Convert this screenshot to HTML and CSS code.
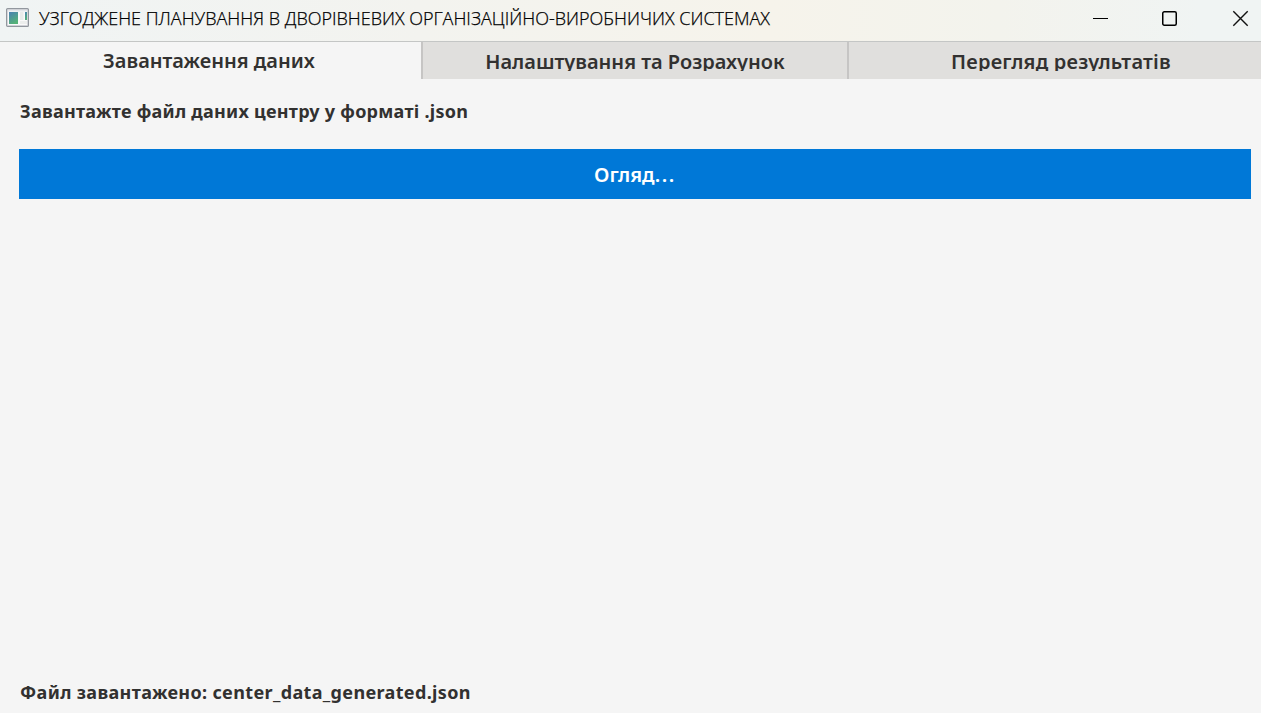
FILE: index.html
```html
<!DOCTYPE html>
<html lang="uk">
<head>
<meta charset="utf-8">
<title>Узгоджене планування</title>
<link rel="stylesheet" href="styles.css">
</head>
<body>
<div class="window">
  <header class="titlebar">
    <svg class="app-icon" width="24" height="20" viewBox="0 0 24 20">
      <defs>
        <linearGradient id="pane" x1="0" y1="0" x2="0.5" y2="1"><stop offset="0" stop-color="#4a80b4"/><stop offset="1" stop-color="#55b278"/></linearGradient>
      </defs>
      <rect x="0.6" y="0.6" width="21.8" height="17.8" rx="1" fill="#e4e6ea" stroke="#92979e" stroke-width="1.2"/>
      <rect x="2" y="3.5" width="19" height="13.5" fill="#fafafa"/>
      <rect x="3" y="4" width="9" height="12" fill="url(#pane)"/>
      <rect x="14" y="4" width="3.5" height="8" fill="#e9ebea"/>
      <rect x="19" y="4" width="2" height="8" fill="url(#pane)"/>
      <rect x="14" y="13" width="7" height="3" fill="#eceeed"/>
    </svg>
    <h1 class="title"><span>УЗГОДЖЕНЕ ПЛАНУВАННЯ В ДВОРІВНЕВИХ ОРГАНІЗАЦІЙНО-ВИРОБНИЧИХ СИСТЕМАХ</span></h1>
    <div class="controls">
      <svg width="16" height="16" viewBox="0 0 16 16"><path d="M0 8.5H15" stroke="#000" fill="none"/></svg>
      <svg width="16" height="16" viewBox="0 0 16 16"><rect x="-0.25" y="1.75" width="13.5" height="13.5" rx="1.5" stroke="#000" stroke-width="1.5" fill="none"/></svg>
      <svg width="16" height="16" viewBox="0 0 16 16"><path d="M0.3 1.3L14.7 15.7M14.7 1.3L0.3 15.7" stroke="#111" stroke-width="1.4" fill="none"/></svg>
    </div>
  </header>
  <nav class="tabs">
    <div class="tab tab-active"><span class="tab-label">Завантаження даних</span></div>
    <div class="tab"><span class="tab-label">Налаштування та Розрахунок</span></div>
    <div class="tab tab-results"><span class="tab-label">Перегляд результатів</span></div>
  </nav>
  <main class="page">
    <p class="label prompt"><span>Завантажте файл даних центру у форматі .json</span></p>
    <button class="browse"><span>Огляд<span class="dots">...</span></span></button>
    <p class="label status"><span>Файл завантажено: center_data_generated.json</span></p>
  </main>
</div>
</body>
</html>
```
FILE: styles.css
```css
* { box-sizing: border-box; }
body { margin: 0; font-family: "Noto Sans", sans-serif; color: #323130; }
.window { width: 1261px; height: 713px; display: flex; flex-direction: column; background: #f5f5f5; overflow: hidden; }
.titlebar { height: 42px; flex: none; display: flex; align-items: flex-start; border-bottom: 1px solid #c4c6c5; background: linear-gradient(90deg, #f0f4f4 0, #f3f3ef 420px, #f6f3eb 770px, #f3f3ed 1000px, #f0f4f3 1200px); }
.app-icon { margin: 8px 0 0 6px; flex: none; }
.title { margin: 6px 0 0 9px; font: 350 18px/24px "Open Sans", sans-serif; color: #000; -webkit-text-stroke: 0.25px #000; white-space: nowrap; }
.controls { display: flex; width: 156px; margin: 10px 12px 0 auto; justify-content: space-between; }
.controls svg { overflow: visible; }
.tabs { height: 37px; flex: none; display: grid; grid-template-columns: 421px 426px 414px; grid-template-rows: 37px; }
.tab { background: #e0dfdd; border-left: 2px solid #c6c5c4; text-align: center; }
.tab-active { background: #f5f5f5; border-left: 0; padding-right: 3px; }
.tab-results { padding-left: 12px; letter-spacing: 0.22px; }
.tab-label { display: inline-block; vertical-align: top; height: 29px; overflow: hidden; font-weight: 600; font-size: 20px; line-height: 39px; white-space: nowrap; }
.tab-active .tab-label { height: 36px; line-height: 37px; }
.page { flex: 1; display: flex; flex-direction: column; padding: 19px 10px 8px 19px; }
.label { margin: 0; padding-left: 1px; font-size: 18px; line-height: 26px; font-weight: 700; white-space: nowrap; }
.prompt { letter-spacing: 0.26px; }
.browse { margin: 25px 0 0; height: 50px; border: 0; background: #0078d7; color: #fff; font: 600 20px/50px "Noto Sans", sans-serif; padding: 1px 0 0; }
.dots { letter-spacing: 1.6px; }
.status { margin-top: auto; letter-spacing: 0.35px; }
```
